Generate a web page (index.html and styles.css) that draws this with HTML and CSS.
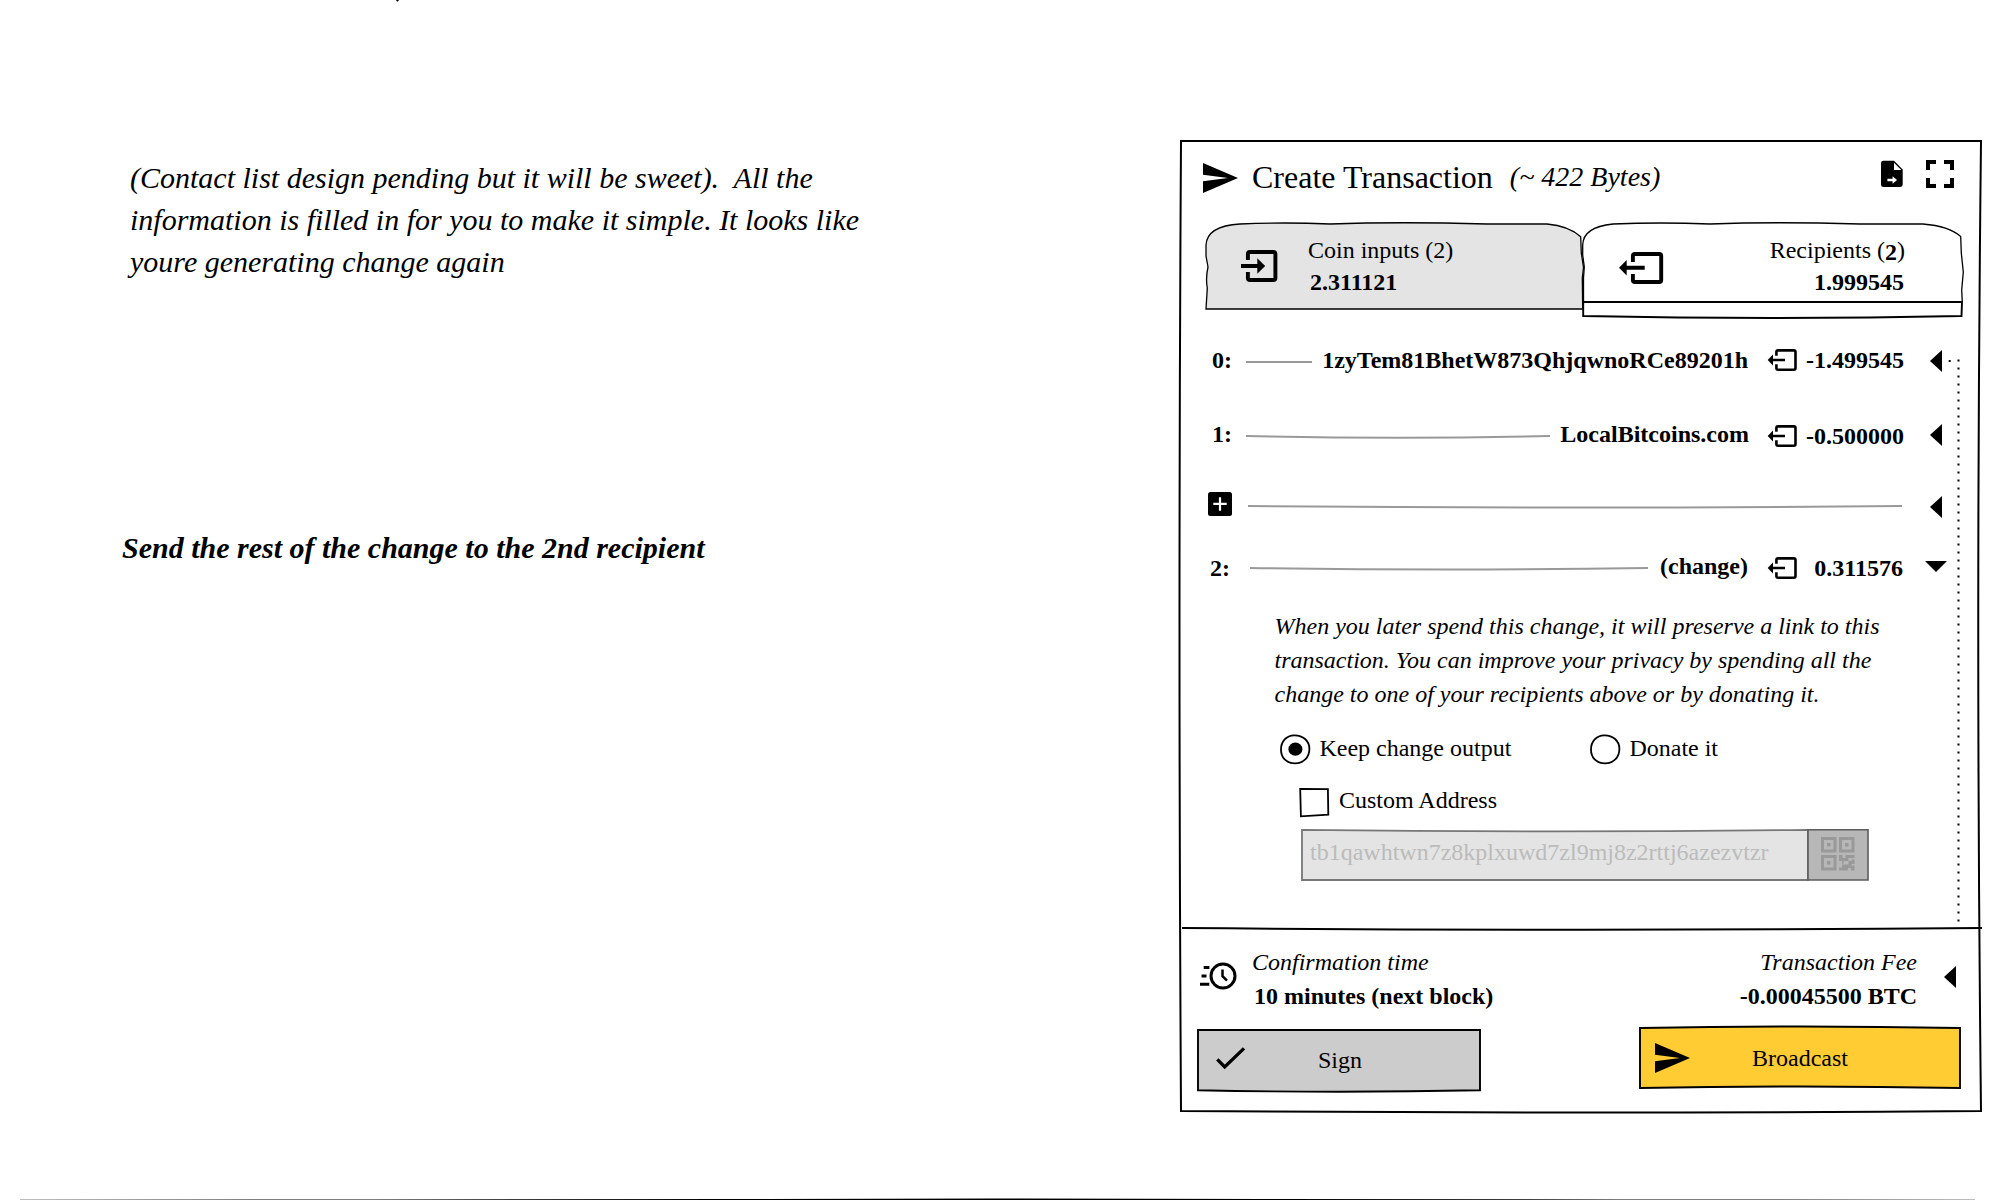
FILE: index.html
```html
<!DOCTYPE html>
<html lang="en">
<head>
<meta charset="utf-8">
<title>Create Transaction</title>
<link rel="stylesheet" href="styles.css">
</head>
<body>
<svg width="0" height="0" class="defs">
  <symbol id="send" viewBox="2 3 21 18"><path d="M2 3v7l15 2-15 2v7l21-9z"/></symbol>
  <symbol id="output" viewBox="1767 348 31 24">
    <path d="M1776.400 355.700V352q0-1.600 1.600-1.600h15.800q1.700 0 1.700 1.600v16q0 1.700-1.700 1.700H1778q-1.600 0-1.600-1.700v-3.700M1772 360H1785" fill="none" stroke="#000" stroke-width="2.600"/>
    <path d="M1767.700 360l5.300-5.500v11z"/>
  </symbol>
  <symbol id="caret" viewBox="0 0 12 22"><path d="M0 11L12 0V22z"/></symbol>
  <symbol id="radio" viewBox="1279 733 33 33"><path d="M1294 735.300C1303 735 1309.500 741 1309.400 749C1309.300 757 1304 763.300 1295 763.300C1286 763.300 1281 757.500 1281 749.500C1281 741.500 1286.500 735.500 1294 735.300z" fill="#fff" stroke="#000" stroke-width="1.800"/></symbol>
</svg>

<main class="board">
  <section class="notes">
    <p class="note">(Contact list design pending but it will be sweet).&nbsp; All the<br>information is filled in for you to make it simple. It looks like<br>youre generating change again</p>
    <p class="note note-strong">Send the rest of the change to the 2nd recipient</p>
  </section>

  <section class="card">
    <svg class="frame" viewBox="1176 136 812 982"><path d="M1181 141H1981Q1975.500 626 1981 1111Q1581 1114 1181 1111Q1178 626 1181 141z"/></svg>

    <header class="card-head">
      <svg class="send"><use href="#send"/></svg>
      <h1>Create Transaction</h1>
      <span class="size">(~ 422 Bytes)</span>
      <svg class="file" viewBox="1881 160 22 28">
        <path d="M1883.500 160.700h10.500l8.700 8.700v15.200q0 2.400-2.400 2.400h-16.800q-2.500 0-2.500-2.400v-21.500q0-2.400 2.500-2.400z"/>
        <path d="M1894 162.700v7.300h7.300zM1887.400 178.700h5.200v-2.500l4.400 3.800-4.400 3.800v-2.500h-5.200z" fill="#fff"/>
      </svg>
      <svg class="full" viewBox="0 0 28 28"><path d="M0 0h10v4H4v6H0zM18 0h10v10h-4V4h-6zM0 18h4v6h6v4H0zM24 18h4v10H18v-4h6z"/></svg>
    </header>

    <nav class="tabs">
      <div class="tab tab-in">
        <svg class="tab-shape" viewBox="1204 220 382 98"><path d="M1206 309L1207.300 288Q1205.500 278 1208 267L1206 256V245Q1207 226 1240 224Q1285 222 1330 224Q1400 221.500 1487 224H1547Q1569 226 1580.700 236.700L1581.300 253L1583.500 267.500L1582.300 278L1582.700 309Q1390 309.600 1206 309z" fill="#e4e4e4" stroke="#000" stroke-width="1.300"/></svg>
        <svg class="tab-icon" viewBox="1240 249 38 34">
          <path d="M1247.900 260V254q0-2 2-2h23.400q2.100 0 2.100 2v24q0 2-2.100 2h-23.400q-2 0-2-2v-6M1241 266h17" fill="none" stroke="#000" stroke-width="3.900"/>
          <path d="M1257.300 258.300l7.900 7.700-7.900 7.800z"/>
        </svg>
        <div class="tab-text">Coin inputs (2)<b>2.311121</b></div>
      </div>
      <div class="tab tab-out">
        <svg class="tab-shape" viewBox="1580 220 386 100"><path d="M1583.500 309V278L1584.300 267L1582.700 255V245Q1583 227 1613 224Q1660 222 1710 224Q1775 221.500 1860 224H1923Q1949 226 1960.700 236.500L1961.300 253L1963.300 272L1961.700 290L1962.300 302" fill="#fff" stroke="#000" stroke-width="1.300"/><path d="M1583.200 302H1962L1961.500 316Q1772 320 1583.200 316z" fill="#fff" stroke="#000" stroke-width="1.900"/></svg>
        <svg class="tab-icon" viewBox="1618 251 46 34">
          <path d="M1632.900 262V256q0-2 2-2h24.300q2 0 2 2v24q0 2-2 2h-24.300q-2 0-2-2v-6M1626 267.800h18.700" fill="none" stroke="#000" stroke-width="3.900"/>
          <path d="M1619 267.800l7.700-7.700v15.400z"/>
        </svg>
        <div class="tab-text"><span>Recipients (<b class="count">2</b>)</span><b>1.999545</b></div>
      </div>
    </nav>

    <div class="outputs">
      <svg class="link" viewBox="1940 357 22 568"><path d="M1948.700 361H1956M1958.500 359.600V923" fill="none" stroke="#000" stroke-width="2" stroke-dasharray="2 6"/></svg>
      <div class="row">
        <b class="index">0:</b>
        <svg class="rule rule-0" viewBox="0 0 66 6"><path d="M0 2H66"/></svg>
        <b class="name">1zyTem81BhetW873QhjqwnoRCe89201h</b>
        <svg class="out"><use href="#output"/></svg>
        <b class="amount">-1.499545</b>
        <svg class="caret"><use href="#caret"/></svg>
      </div>
      <div class="row">
        <b class="index">1:</b>
        <svg class="rule rule-1" viewBox="0 0 304 6"><path d="M0 2Q152 5.400 304 2"/></svg>
        <b class="name name-1">LocalBitcoins.com</b>
        <svg class="out lower"><use href="#output"/></svg>
        <b class="amount lower">-0.500000</b>
        <svg class="caret"><use href="#caret"/></svg>
      </div>
      <div class="row row-add">
        <svg class="add" viewBox="0 0 24 24"><rect width="24" height="24" rx="2.500"/><path d="M5.300 11.900h13.400M12 5.200v13.600" stroke="#fff" stroke-width="2.200"/></svg>
        <svg class="rule rule-add" viewBox="0 0 654 6"><path d="M0 2Q327 5 654 2"/></svg>
        <svg class="caret"><use href="#caret"/></svg>
      </div>
      <div class="row row-change">
        <b class="index lower">2:</b>
        <svg class="rule rule-2" viewBox="0 0 398 6"><path d="M0 2Q199 5 398 2"/></svg>
        <b class="name">(change)</b>
        <svg class="out"><use href="#output"/></svg>
        <b class="amount lower">0.311576</b>
        <svg class="caret-down" viewBox="0 0 22 11"><path d="M0 0H22L11 11z"/></svg>
      </div>

      <p class="hint">When you later spend this change, it will preserve a link to this<br>transaction. You can improve your privacy by spending all the<br>change to one of your recipients above or by donating it.</p>

      <div class="choices">
        <label class="choice keep"><svg class="radio" viewBox="0 0 33 33"><use href="#radio" width="33" height="33"/><ellipse cx="16.400" cy="16.200" rx="7" ry="6.600"/></svg>Keep change output</label>
        <label class="choice"><svg class="radio" viewBox="0 0 33 33"><use href="#radio" width="33" height="33"/></svg>Donate it</label>
      </div>
      <label class="custom"><svg class="check" viewBox="1298 786 33 33"><path d="M1300.200 788.800L1327.900 789.200L1328.300 814.600L1300.900 816.300z" fill="#fff" stroke="#000" stroke-width="1.800"/></svg>Custom Address</label>
      <div class="address">
        <svg class="address-shape" viewBox="1300 827 570 56"><path d="M1302 829.800Q1555 832.800 1808 829.800V880H1302z" fill="#e4e4e4" stroke="#777" stroke-width="1.800"/><path d="M1808 829.800H1868V880H1808z" fill="#b7b7b7" stroke="#5c5c5c" stroke-width="1.600"/></svg>
        <span class="address-text">tb1qawhtwn7z8kplxuwd7zl9mj8z2rttj6azezvtzr</span>
        <svg class="qr" viewBox="0 0 34 34"><path fill-rule="evenodd" d="M0 0h15.500v15.500H0zM3 3v9.500h9.500V3zM18 0h15.500v15.500H18zM21 3v9.500h9.500V3zM0 18h15.500v15.500H0zM3 21v9.500h9.500V21zM6 6h3.500v3.500H6zM24 6h3.500v3.500H24zM6 24h3.500v3.500H6z"/><path d="M18 18h3.500v3H25v3h-2.500v3H21v-3h-3zM24.500 18h9v3h-6v3h-3zM27.500 24h3v-1.500h3V27h-3v1.500h3v5H30v-2.500h-3v2.500h-9v-3h3v-3h6.500z"/></svg>
      </div>
    </div>

    <footer class="card-foot">
      <svg class="divider" viewBox="1180 924 804 10"><path d="M1182 928Q1582 931.400 1982 928"/></svg>
      <div class="summary">
        <svg class="clock" viewBox="1198 960 42 32">
          <g fill="none" stroke="#000"><circle cx="1223" cy="976" r="12" stroke-width="3"/><path d="M1222.500 969.500v6.700l4.500 4.500" stroke-width="2.500"/><path d="M1203.700 967.500h5.700M1201.500 976h5M1200 984.300h9.300" stroke-width="3"/></g>
        </svg>
        <div class="time"><i>Confirmation time</i><b>10 minutes (next block)</b></div>
        <div class="fee"><i>Transaction Fee</i><b>-0.00045500 BTC</b></div>
        <svg class="caret"><use href="#caret"/></svg>
      </div>
      <div class="actions">
        <div class="button sign">
          <svg class="button-shape" viewBox="1196 1026 286 68"><path d="M1198 1030H1480V1090.300Q1339 1093.200 1198 1090.300z" fill="#ccc" stroke="#000" stroke-width="1.900"/></svg>
          <svg class="tick" viewBox="1214 1045 34 26"><path d="M1217.300 1059.300l7.400 7.600 19.300-18.500" fill="none" stroke="#000" stroke-width="3.300"/></svg>
          <span>Sign</span>
        </div>
        <div class="button broadcast">
          <svg class="button-shape" viewBox="1638 1023 324 68"><path d="M1640 1028Q1800 1024.900 1960 1028V1088Q1800 1085 1640 1088z" fill="#fc3" stroke="#000" stroke-width="1.900"/></svg>
          <svg class="send"><use href="#send"/></svg>
          <span>Broadcast</span>
        </div>
      </div>
    </footer>
  </section>
</main>
<svg class="page-edge" viewBox="0 1190 2000 10"><path d="M20 1199.800L375 1199.400L730 1199L997 1198.400L1265 1199L1620 1199.400L1975 1199.800V1202H20z"/></svg>
<svg class="top-mark" viewBox="0 0 4 2"><path d="M0 0h3l-1 1.500H1z"/></svg>
</body>
</html>
```
FILE: styles.css
```css
* { box-sizing: border-box; }
body {
  margin: 0;
  width: 2000px;
  height: 1200px;
  position: relative;
  overflow: hidden;
  background: #fff;
  color: #000;
  font: 24px/34px "Liberation Serif", serif;
}
svg { display: block; flex: none; }
.defs, .frame, .tab-shape, .link, .address-shape, .divider, .button-shape, .page-edge, .top-mark { position: absolute; }
.board { display: grid; grid-template-columns: 1180px 802px; height: 1200px; }
.notes { padding: 157px 0 0 130px; }
.note { margin: 0; font-size: 30px; line-height: 42px; font-style: italic; white-space: nowrap; }
.note-strong { margin: 244px 0 0 -8px; font-weight: bold; }

.card { position: relative; margin-top: 140px; height: 972px; display: flex; flex-direction: column; }
.frame { left: -4px; top: -4px; width: 812px; height: 982px; fill: none; stroke: #000; stroke-width: 2; }

.card-head { height: 83px; display: flex; align-items: flex-start; padding: 20px 28px 0 23px; position: relative; }
.send { width: 35px; height: 30px; margin-top: 3px; }
.card-head h1 { margin: 0 0 0 14px; font-size: 32px; line-height: 34px; font-weight: normal; }
.size { margin-left: 17px; font-size: 28px; line-height: 34px; font-style: italic; }
.file { width: 22px; height: 28px; margin-left: auto; }
.full { width: 28px; height: 28px; margin-left: 23px; }

.tabs { height: 97px; display: flex; padding: 0 20px 0 26px; }
.tab { position: relative; display: flex; flex: none; padding-top: 10px; }
.tab-in { width: 377px; }
.tab-out { width: 379px; }
.tab-shape { left: -2px; top: -3px; }
.tab-in .tab-shape { width: 382px; height: 98px; }
.tab-out .tab-shape { left: -3px; width: 386px; height: 100px; }
.tab-icon, .tab-text { position: relative; }
.tab-in .tab-icon { width: 38px; height: 34px; margin: 16px 0 0 34px; }
.tab-out .tab-icon { width: 46px; height: 34px; margin: 18px 0 0 35px; }
.tab-text { line-height: 32px; margin-top: 1px; white-space: nowrap; }
.tab-text > b:last-child { display: block; }
.tab-in .tab-text { margin-left: 30px; }
.tab-in .tab-text b { padding-left: 2px; }
.tab-out .tab-text { margin-left: auto; padding-right: 57px; text-align: right; }
.tab-out .tab-text > b { padding-right: 1px; }
.tab-out .count { position: relative; top: 2px; }

.outputs { position: relative; height: 608px; padding: 23px 0 0 32px; }
.link { left: 760px; top: 37px; width: 22px; height: 568px; }
.row { display: flex; align-items: flex-start; height: 74px; padding-right: 40px; }
.lower { position: relative; top: 2px; }
.index { width: 34px; flex: none; }
.rule { height: 6px; margin-top: 17px; fill: none; stroke: #999; stroke-width: 2; }
.rule-0 { width: 66px; }
.rule-1 { width: 304px; }
.rule-add { width: 654px; margin: 13px 0 0 16px; }
.rule-2 { width: 398px; }
.name { margin-left: auto; }
.name-1 { margin-right: -1px; }
.out { width: 31px; height: 24px; margin: 5px 0 0 19px; }
.amount { width: 106px; text-align: right; }
.caret { width: 12px; height: 22px; margin: 7px 0 0 26px; }
.row-add { height: 58px; }
.add { width: 24px; height: 24px; margin: 1px 0 0 -4px; }
.row-add .caret { margin: 5px 0 0 28px; }
.row-change { height: 60px; margin-left: -2px; padding-right: 35px; }
.row-change .index { width: 40px; }
.row-change .name { margin-right: 1px; }
.row-change .out { margin: 7px 0 0 18px; }
.row-change .amount { width: 105px; }
.caret-down { width: 22px; height: 11px; margin: 12px 0 0 22px; }
.hint { margin: 0 0 0 62.5px; font-style: italic; white-space: nowrap; }
.choices { display: flex; margin: 20px 0 0 67px; }
.choice, .custom { display: flex; align-items: flex-start; }
.keep { width: 310px; }
.radio { width: 33px; height: 33px; margin: 2px 7.4px 0 0; }
.custom { margin: 17px 0 0 86px; height: 34px; }
.check { width: 33px; height: 33px; margin: 3px 8px 0 0; }
.address { position: relative; display: flex; margin: 12px 0 0 90px; height: 52px; }
.address-shape { left: -2px; top: -2px; width: 570px; height: 56px; }
.address-text { position: relative; margin: 6px 0 0 8px; width: 511px; color: #bbb; }
.qr { position: relative; width: 34px; height: 34px; margin-top: 8px; fill: #999; }

.card-foot { position: relative; padding: 17px 0 0 17px; }
.divider { left: 0; top: -4px; width: 804px; height: 10px; fill: none; stroke: #000; stroke-width: 2; }
.summary { display: flex; height: 84px; padding-right: 26px; }
.clock { width: 42px; height: 32px; margin: 15px 0 0 1px; }
.time i, .time b, .fee i, .fee b { display: block; }
.time { margin-left: 12px; }
.time b { padding-left: 2px; }
.fee { margin-left: auto; text-align: right; }
.summary .caret { margin: 21px 0 0 27px; }
.actions { display: flex; justify-content: space-between; padding-right: 22px; height: 64px; }
.button { position: relative; display: flex; height: 62px; }
.button span { position: relative; }
.sign { width: 284px; }
.sign .button-shape { left: -1px; top: -3px; width: 286px; height: 68px; }
.tick { position: relative; width: 34px; height: 26px; margin: 16px 0 0 17px; }
.sign span { margin: 14px 0 0 70px; }
.broadcast { width: 321px; }
.broadcast .button-shape { left: -1px; top: -6px; width: 324px; height: 68px; }
.broadcast .send { position: relative; margin: 14px 0 0 16px; }
.broadcast span { margin: 12px 0 0 62px; }

.page-edge { left: 0; top: 1190px; width: 2000px; height: 10px; }
.top-mark { left: 396px; top: 0; width: 4px; height: 2px; }
```
